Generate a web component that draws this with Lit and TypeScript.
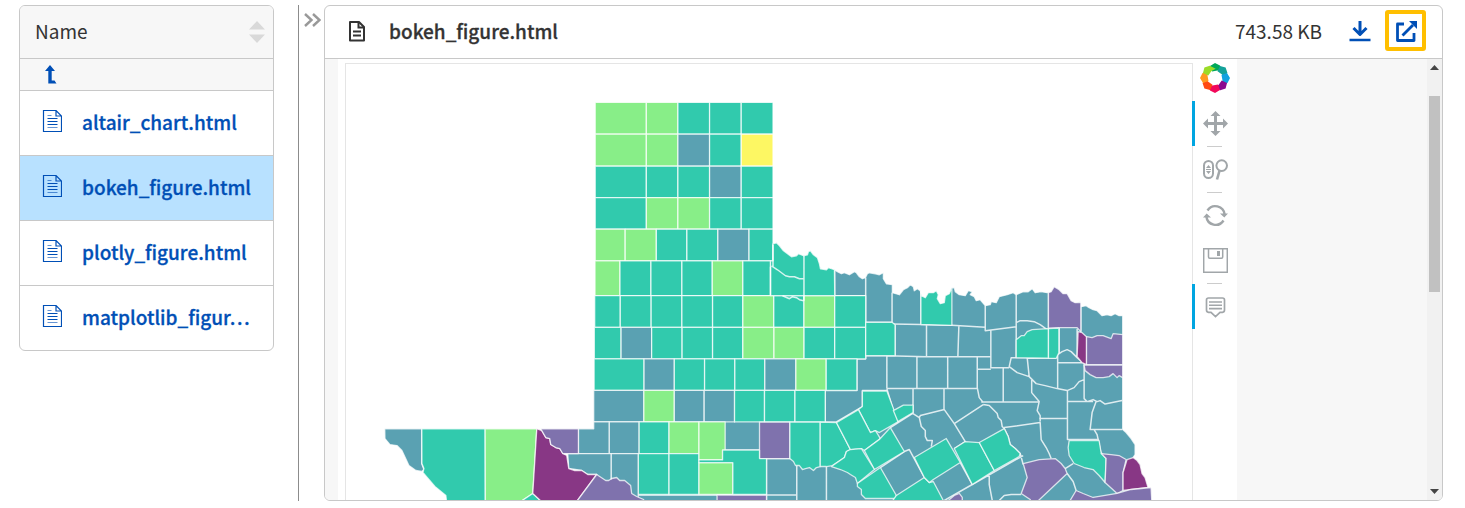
import { LitElement, html, svg, css } from "lit";
import { customElement, property } from "lit/decorators.js";

const FILL: Record<string, string> = {
  B: "#5aa1b2",
  G: "#31caad",
  L: "#88ee88",
  Y: "#fdf763",
  P: "#7f72ad",
  M: "#883785",
};

/* Rows of rectangular counties: top, bottom, x edges, one colour code per cell */
const ROWS: [number, number, number[], string][] = [
  [102.5, 134.3, [595.5, 646.7, 678.3, 710, 741.7, 773.5], "LLGGG"],
  [134.3, 166.3, [595.5, 646.7, 678.3, 710, 741.7, 773.5], "LLBGY"],
  [166.3, 197.7, [595.5, 646.7, 678.3, 710, 741.7, 773.5], "GGGBG"],
  [197.7, 229.4, [595.5, 646.7, 678.3, 710, 741.7, 773.5], "GLLGG"],
  [229.4, 261.2, [595.5, 625.5, 656.7, 687.3, 718.3, 749.5, 773.5], "LLGGBG"],
  [261.2, 296, [595.3, 620.3, 651.3, 682.3, 712.7, 743.3, 771], "LGGGLG"],
  [296, 327.6, [595, 620.6, 651.5, 682.3, 713, 743.3, 774.3, 804.5, 835.3, 866.3], "GGGGGLGLG"],
  [327.6, 359.2, [594.6, 621.4, 652, 682.5, 713, 743.3, 774.5, 804.6, 835.3, 866.3], "GBGGGLLGG"],
  [359.2, 390.8, [594.4, 644.4, 674.7, 705, 735.3, 765.3, 796.4, 826.8, 857.5], "GBGGGBLG"],
  [390.8, 422.4, [594, 644.2, 674.7, 704.6, 735, 765, 795.5, 825.8], "BLBBGGG"],
  [422.4, 454, [609.4, 639.5, 669.4], "BG"],
  [422.4, 454, [669.4, 699.4], "L"],
  [454, 495, [638.5, 669.4, 699.4], "GG"],
  [463.2, 495, [699.4, 733.3], "L"],
  [422.6, 459, [760, 790.4], "P"],
  [495.5, 506, [717.5, 767], "P"],
];

const OUTLINE =
  "773.5,244 777,243 780,246 784,251 788,254 792,257 797,256 799,254 804,256 808,255 809,252 811,251 814,255 818,258 820,264 821,269 827,270 829,268 835,270 838,272 842,274 845,273 850,275 855,272 857,273 860,277 863,279 866,278 868,274 870,273 876,274 880,275 884,273 884,279 887,284 893,285 893,293 900,295 904,290 908,288 911,285 914,287 915,291 918,289 921,291 922,296 926,298 929,293 934,293 937,291 939,295 938,299 941,304 945,303 946,296 950,294 952,288 955,288 956,292 960,295 966,296 969,291 973,292 971,295 975,297 977,301 981,300 986,306 991,305 992,302 997,303 1000,297 1008,295 1014,293 1017,295 1024,292 1029,292 1033,289 1036,293 1042,292 1048,293 1052,292 1055,287 1060,290 1064,294 1068,294 1072,301 1076,303 1081,302 1082,307 1087,306 1090,308 1094,310 1098,311 1103,316 1108,315 1112,316 1116,314 1120,316 1123.6,316 1123.6,430 1127,433 1132,439 1136,445 1136,455 1134,458 1138,461 1141,465 1143,474 1146,478 1149,489 1152,490 1153,506 597,506 578.7,429.2 594,429.2 594,390 640,359 866,359 866,296 771,296";

/* Irregular counties */
const SHAPES: [string, string][] = [
  ["B", "594,422.4 609.4,422.4 609.4,454 578.7,454 578.7,429.2 594,429.2"],
  ["B", "568,454 638.5,454 638.5,506 597,506 597,475 588,475 582,471 569,469"],
  ["G", "771,261.2 773.5,261 773.5,244 777,243 780,246 784,251 788,254 792,257 797,256 799,254 804,256 808,255 809,252 811,251 814,255 818,258 820,264 821,269 827,270 829,268 835,270 835.3,296 771,296"],
  ["G", "921.6,293 922,296 926,298 929,293 934,293 937,291 939,295 938,299 941,304 945,303 946,296 950,294 952.6,288 952.6,325.6 921.6,324.8"],
  ["G", "866.3,322.6 892.7,322.6 895.7,325 895.7,356 866.3,356"],
  ["P", "1049.3,293 1052,292 1055,287 1060,290 1064,294 1068,294 1072,301 1076,303 1081.7,303 1081.7,332 1078,328 1060,328 1049.3,328.5"],
  ["G", "1017,340 1022,336 1025,336 1028,332 1033,330 1049.3,329 1049.3,358.5 1017,358"],
  ["G", "1049.3,329 1059.7,328.4 1059.7,353 1057,358.8 1049.3,358.5"],
  ["M", "1079,332 1083,333 1087.4,337 1087.4,365 1083,363 1078,357"],
  ["P", "1087.4,337 1093,338 1098,336 1104,336 1112,339 1114,334 1123.6,335 1123.6,365 1087.4,365"],
  ["P", "1085,365.5 1123.6,365.5 1123.6,378 1120,376 1118,378 1114,374 1110,377 1104,378 1097,378 1091,375 1086,371"],
  ["L", "699.4,422.4 725.6,422.4 725.6,450.5 723,450.5 723,460.4 699.4,460.4"],
  ["G", "723,450.5 760,450.5 760,459 767,459 767,495 733.3,495 733.3,463.2 699.4,463.2 699.4,460.4 723,460.4"],
  ["G", "790.4,422.6 820.8,422.6 820.8,467 817,468 814,471 810,468 806,469 803,470 800,466 796,466 794,462 790.4,459"],
  ["G", "820.8,422.6 837,423 851,450 847,452 845,458 833,466 827,467 820.8,467"],
  ["G", "863,391.5 887.5,391.5 899,422 880,433 876,431 871,433 859,410 863,407"],
  ["G", "859,410 871,433 876,431 878,434 881,439 865,451 862,449 851,450 837,423"],
  ["G", "880,440 891,428 905,452 875,470 865,451"],
  ["G", "894,411 904,405.5 913.7,405.5 913.7,413 898.5,422"],
  ["G", "847,452 851,450 862,449 875,470 858,484 856,478 851,475 848,473 841,470 832,467 845,458"],
  ["G", "858,484 881,468 897,496 896,499 866,499 862,495 862,490 858,487"],
  ["G", "897,496 925,478 930,483 934,482 944,501 944,506 890,506"],
  ["G", "915,458 947,439 961,463 934,480 930,483 925,478"],
  ["G", "955,449 966,442 980,443 995,471 973,485"],
  ["G", "980,443 1005,429 1009,437 1011,445 1016,449 1021,454 1020,457 995,471"],
  ["P", "949,501 955,496 960,494 963,498 963,506 945,506"],
  ["P", "1024,464 1040,460 1056,459 1062,464 1066,469 1068,474 1034,506 1031,500 1022,494 1028,478"],
  ["G", "1070,441 1100,441 1102,453 1107,459 1106,483 1100,476 1094,470 1085,468 1075,464 1070,456 1069,448"],
  ["P", "1102,454 1112,455 1120,456 1127,460 1124,473 1124,491 1118,494 1106,483 1107,459"],
  ["M", "1128,460 1134,458 1138,461 1141,465 1143,474 1146,478 1149,488 1124,491 1124,473"],
  ["P", "1068,506 1077,491 1084,494 1094,498 1118,494 1132,490 1152,488 1153,506"],
  ["B", "384.8,429.2 421.7,429.2 421.7,464 424,470 422,472 416,471 409,466 402,451 397,446 390,445 385,439"],
  ["G", "421.9,429.2 485.3,429.2 485.5,506 447,506 446,496 435,487 423,473 424,469 422,464"],
  ["L", "485.3,429.2 537,429.2 533,494 515,506 485.5,506"],
  ["G", "533,494 546,506 515,506"],
  ["M", "537,429.2 542,431 546,438 550,439 551,445 556,448 560,449 563,454 567,456 569,469 575,471 582,471 588,475 597,475 574,506 546,506 533,494"],
  ["P", "541,429.2 578.7,429.2 578.7,454 563,454 560,449 556,448 551,445 550,439 546,438"],
  ["P", "597,475 606,481 609,481 612,479 617,478 620,481 625,481 631,486 632,494 637,497 644,500 644,506 574,506"],
];

/* Borders between counties of the plain blue base */
const LINES =
  "M835.3 270V296H866.3M866.3 278V359H857.5V390.8H825.8V422.4H837L863 407V391H887.5M866.3 322.5H892.7V293M892.7 324.4 921.6 324.8 952.6 325.6 986 327.5M921.6 291V324.8M986 306V331L1017 327" +
  "M895.7 325V356M927.2 325V357M959.6 326 958.6 357M991.6 330V368H1010M866.3 356H887.7L927 357H991.6M887.5 356V389M917.6 357V388.6M948.4 357V389M978 357V388L980 398 984 403M887.5 388.6 978 389M978 369.6H991.6M1004 368V402.5M982 402.5H1040" +
  "M1017 295V358M1017 323 1021 321 1028 321 1035 322 1041 325 1048 330M1049.3 293V358.5M1060 328V353M1078 329V357M1012 358H1028L1030 377 1018 373 1010 367ZM1028 358.5H1057M1058.5 355 1063 352 1068 350 1072 352 1078 358 1085 364V399L1088 402 1094 400 1098 402 1101 401 1106 404.5 1123 401M1058.5 355V389M1058.5 363H1083M1081.7 303V332" +
  "M1030 377 1037 384 1046 386 1050 387 1058 389 1068 391 1075 388 1080 382 1085 380M1032.5 379V393L1040 402 1038 411 1041 416V422M1068.3 391V440H1100M1068.3 402H1094M1097 402 1093 413 1091 430H1123M1040 419H1068M1095 430 1098 435 1102 454M1005 428 1041 423 1042 440 1047 448 1050 454 1052 459M984 405 990 406 995 411 998 414 999 418 1002 421 1003 427 1005 429 1009 437 1011 445 1016 449 1021 454 1024 465" +
  "M887.5 389 894 411M913.7 389V414L920 418 921 416 945 410 955 424 984 405M944.7 389V410M955 424 966 442 955 449M891 428 913 414M920 418 922 427 926 431 926 437 928 441 933 441 932 447M905 452 910 450 925 478M881 468 905 452" +
  "M973 485 945 501M961 463 973 485 1024 456M990 475V485L994 506M1000 501 1005 496 1012 495 1022 495M1068 474 1074 482 1077 491M1066 469 1074 464M1132 490 1133 506M797.3 466V506M827 467V506M760 459H797M638 495.5H797M767 459V506M725.6 450.5H760";

/* Rivers and borders that run over the filled counties */
const INNER_LINES =
  "M772 266 778 270 786 276 790 277 795 277 800 279 804 279M771 267V296M773.5 245V267M804.5 256V301M783 296 790 299 793 297 797 298 800 300 804 301M611.5 454V480";

function points(x0: number, y0: number, x1: number, y1: number) {
  return `${x0},${y0} ${x1},${y0} ${x1},${y1} ${x0},${y1}`;
}

@customElement("county-map")
class CountyMap extends LitElement {
  static styles = css`
    :host { display: block; }
    .map { display: block; width: 100%; }
    .county { stroke: #fff; stroke-opacity: 0.75; stroke-width: 1.3; stroke-linejoin: round; }
    .border { fill: none; stroke: #fff; stroke-opacity: 0.8; stroke-width: 1.5; stroke-linejoin: round; }
  `;

  render() {
    return html`<svg class="map" viewBox="346 64 847 442" role="img" aria-label="Texas county map">
      <polygon class="county" fill=${FILL.B} points=${OUTLINE}></polygon>
      <path class="border" d=${LINES}></path>
      ${ROWS.map(([top, bottom, xs, codes]) =>
        [...codes].map((c, i) => svg`<polygon class="county" fill=${FILL[c]} points=${points(xs[i], top, xs[i + 1], bottom)}></polygon>`)
      )}
      ${SHAPES.map(([c, p]) => svg`<polygon class="county" fill=${FILL[c]} points=${p}></polygon>`)}
      <path class="border" d=${INNER_LINES}></path>
    </svg>`;
  }
}

const PETALS = ["#00a859", "#14a29a", "#12a1e0", "#8b0a8f", "#f2085a", "#ff4a12", "#ff9a1f", "#9bdc28"];

const TOOL_ICONS = {
  pan: svg`<path fill="#a1a6a9" d="M12.5 0 17.5 5H14V11H20V7.500L25 12.500 20 17.500V14H14V20H17.500L12.500 25 7.500 20H11V14H5V17.500L0 12.500 5 7.500V11H11V5H7.500Z"/>`,
  zoom: svg`<g fill="none" stroke="#a1a6a9"><rect x="1" y="4" width="9" height="17" rx="4.500" stroke-width="2"/><circle cx="18.700" cy="8.600" r="5.300" stroke-width="2"/><path d="M16.600 13.500 14 22.500" stroke-width="2.600"/><path d="M3 12.500H8" stroke-width="1"/></g><path fill="#a1a6a9" d="M5.500 8 8 11H3ZM5.500 17 8 14H3Z"/>`,
  reset: svg`<g fill="none" stroke="#a1a6a9" stroke-width="2.400"><path d="M4.500 7.500A9.300 9.300 0 0 1 21.600 11.500"/><path d="M20.500 17.500A9.300 9.300 0 0 1 3.400 13.500"/></g><path fill="#a1a6a9" d="M17 10.500H25L21.300 14.500ZM0 14.500H8L3.700 10.500Z"/>`,
  save: svg`<g fill="none" stroke="#a1a6a9" stroke-width="1.500"><path d="M.7.700H24.300V24.300H.7ZM5.500.700V9Q5.500 10.200 6.700 10.200H18.500Q19.700 10.200 19.700 9V.7"/></g><path fill="#a1a6a9" d="M14 3H17V8H14Z"/>`,
  hover: svg`<path fill="none" stroke="#a1a6a9" stroke-width="1.700" d="M5.500 4H19.500Q21.500 4 21.500 6V16Q21.500 18 19.500 18.300H17L12.500 22.500 8 18.300H5.500Q3.500 18 3.500 16V6Q3.500 4 5.500 4Z"/><path stroke="#a1a6a9" stroke-width="1.600" d="M6 8H19M6 11.300H19M6 14.600H19"/>`,
};

@customElement("plot-toolbar")
class PlotToolbar extends LitElement {
  static styles = css`
    :host { display: flex; flex-direction: column; align-items: flex-start; }
    .logo { display: block; width: 30px; height: 30px; margin: 0 0 8px 8px; }
    .tool { display: flex; align-items: center; width: 45px; height: 45px; padding: 0 0 1px 8px; border: 0; border-left: 3px solid transparent; background: none; }
    .tool[aria-pressed="true"] { border-left-color: #00a5e1; }
    .icon { width: 25px; height: 25px; }
    .rule { width: 15px; height: 1px; margin-left: 15px; background: #ccc; }
  `;

  tool(label: string, icon: unknown, active = false) {
    return html`<button class="tool" type="button" aria-label=${label} aria-pressed=${active ? "true" : "false"}>
      <svg class="icon" viewBox="0 0 25 25">${icon}</svg>
    </button>`;
  }

  render() {
    return html`
      <svg class="logo" viewBox="-15 -15 30 30" role="img" aria-label="Bokeh">
        ${PETALS.map((c, i) => svg`<path fill=${c} transform="rotate(${i * 45})" d="M-5 -12 0 -15 5 -12.500 7 -6 2.500 -7.500 -3 -6.500Z"/>`)}
      </svg>
      ${this.tool("Pan", TOOL_ICONS.pan, true)}
      <div class="rule"></div>
      ${this.tool("Wheel zoom", TOOL_ICONS.zoom)}
      <div class="rule"></div>
      ${this.tool("Reset", TOOL_ICONS.reset)}
      ${this.tool("Save", TOOL_ICONS.save)}
      <div class="rule"></div>
      ${this.tool("Hover", TOOL_ICONS.hover, true)}
    `;
  }
}

@customElement("file-list")
class FileList extends LitElement {
  @property({ type: Array }) files: string[] = [];
  @property() selected = "";

  static styles = css`
    :host { display: block; border: 1px solid #c8c8c8; border-radius: 6px; overflow: hidden; }
    .list { width: 100%; border-collapse: collapse; table-layout: fixed; }
    .head { height: 52px; padding: 0 8px 0 15px; background: #f7f7f7; font-weight: 400; text-align: left; }
    .sort { display: flex; align-items: center; justify-content: space-between; width: 100%; padding: 0; border: 0; background: none; font: inherit; color: #333; }
    .label { padding-bottom: 2px; }
    .arrows { width: 16px; height: 22px; }
    .up, .cell { padding: 0; border-top: 1px solid #c8c8c8; }
    .up { height: 31px; background: #f7f7f7; }
    .cell { height: 64px; }
    .selected { background: #b8e1ff; }
    .parent { display: flex; padding-left: 25px; }
    .upicon { width: 12px; height: 19px; }
    .link { display: flex; align-items: center; gap: 20px; padding: 0 19px 2px 22px; color: #004fb6; text-decoration: none; font-weight: 500; -webkit-text-stroke: 0.3px #004fb6; }
    .file { flex: none; width: 20px; height: 24px; }
    .name { white-space: nowrap; }
  `;

  render() {
    return html`<table class="list">
      <thead>
        <tr><th class="head" scope="col"><button class="sort" type="button"><span class="label">Name</span>
          <svg class="arrows" viewBox="0 0 16 22" fill="#d9d9d9"><path d="M8 0 16 8.500H0ZM8 22 16 13.500H0Z"/></svg>
        </button></th></tr>
      </thead>
      <tbody>
        <tr><td class="up"><a class="parent" href="#" aria-label="Parent folder">
          <svg class="upicon" viewBox="0 0 12 19" fill="#004fb6"><path d="M5 0 10 6H6.700V15.500H9.500L11.500 18.500H3.300V6H0Z"/></svg>
        </a></td></tr>
        ${this.files.map((name) => html`<tr><td class="cell ${name === this.selected ? "selected" : ""}">
          <a class="link" href="#">
            <svg class="file" viewBox="0 0 20 24" fill="none" stroke="#004fb6">
              <path stroke-width="1.200" d="M1.500.500H14L19.500 6V21.500H1.500ZM14 .5V6H19.500"/>
              <path d="M5.500 5.500H9.500" opacity=".6"/><path d="M5.500 8.500H15.500M5.500 11.500H15.500M5.500 14.500H15.500"/><path d="M5.500 17.500H15.500" opacity=".6"/>
            </svg>
            <span class="name">${name}</span>
          </a>
        </td></tr>`)}
      </tbody>
    </table>`;
  }
}

@customElement("app-root")
class AppRoot extends LitElement {
  static styles = css`
    :host {
      display: flex; align-items: flex-start; box-sizing: border-box; height: 100vh; padding: 5px 22px 7px 19px;
      background: #fff; color: #333; font: 19px/26px "Noto Sans CJK KR", sans-serif;
    }
    .files { flex: none; width: 253px; margin-right: 24px; }
    .splitter { display: flex; align-items: flex-start; align-self: stretch; flex: none; width: 26px; padding: 0; border: 0; border-left: 1px solid #8c8c8c; background: none; }
    .chevrons { width: 17px; height: 14px; margin: 8px 0 0 5px; }
    .viewer { display: flex; flex-direction: column; align-self: stretch; flex: 1; min-width: 0; border: 1px solid #c8c8c8; border-radius: 6px; overflow: hidden; }
    .bar { display: flex; align-items: center; box-sizing: border-box; flex: none; height: 53px; padding: 0 16px 3px 23px; border-bottom: 1px solid #c8c8c8; }
    .doc { width: 18px; height: 22px; }
    .title { flex: 1; margin: 0 0 0 23px; font-size: 19px; font-weight: 500; -webkit-text-stroke: 0.3px #333; }
    .action { display: flex; align-items: center; justify-content: center; box-sizing: border-box; width: 41px; height: 41px; border: 4px solid transparent; border-radius: 3px; }
    .download { margin-left: 17px; margin-right: 5px; }
    .marked { border-color: #ffbf00; }
    .glyph { width: 22px; height: 22px; }
    .body { display: flex; flex: 1; min-height: 0; background: #f7f7f7; }
    .frame { flex: 1; min-width: 0; overflow: hidden; padding-left: 13px; }
    .figure { display: flex; align-items: flex-start; width: 899px; margin: 0; padding: 4px 0 0 7px; box-sizing: border-box; background: #fff; }
    .plot { flex: none; box-sizing: border-box; width: 848px; border: 1px solid #e5e5e5; border-width: 1px 1px 0 1px; }
    .tools { flex: none; margin-left: -1px; }
    .scroll { display: flex; flex-direction: column; align-items: center; width: 15px; background: #f1f1f1; }
    .arrow { flex: none; width: 9px; height: 5px; margin: 6px 0; }
    .track { flex: 1; width: 11px; padding-top: 20px; }
    .thumb { height: 196px; background: #c1c1c1; }
  `;

  render() {
    return html`
      <file-list class="files" selected="bokeh_figure.html"
        .files=${["altair_chart.html", "bokeh_figure.html", "plotly_figure.html", "matplotlib_figur…"]}></file-list>
      <button class="splitter" type="button" aria-label="Collapse file list">
        <svg class="chevrons" viewBox="0 0 17 14" fill="none" stroke="#999" stroke-width="2.400"><path d="M1 1 7.500 7 1 13M9 1 15.500 7 9 13"/></svg>
      </button>
      <main class="viewer">
        <header class="bar">
          <svg class="doc" viewBox="0 0 18 22" fill="none" stroke="#333" stroke-width="2"><path stroke-linejoin="round" d="M2 2H11L16 7V20.500H2Z"/><path d="M10.500 2V7.500H16M5 11.500H13M5 15.500H13"/></svg>
          <h1 class="title">bokeh_figure.html</h1>
          <span>743.58 KB</span>
          <a class="action download" href="#" aria-label="Download">
            <svg class="glyph" viewBox="0 0 22 22" fill="none" stroke="#004fb6" stroke-width="3"><path d="M11 1V14M4.500 8 11 14.500 17.500 8" stroke-linejoin="round"/><path d="M.5 20H21.500" stroke-width="2.600"/></svg>
          </a>
          <a class="action marked" href="#" aria-label="Open in new tab">
            <svg class="glyph" viewBox="0 0 22 22" fill="none" stroke="#004fb6" stroke-width="2.800"><path d="M9 4H2.500V20.500H19V13" stroke-linejoin="round"/><path d="M7.500 15.500 18 5"/><path fill="#004fb6" stroke="none" d="M14 1H22V9Z"/></svg>
          </a>
        </header>
        <div class="body">
          <div class="frame">
            <figure class="figure">
              <county-map class="plot"></county-map>
              <plot-toolbar class="tools"></plot-toolbar>
            </figure>
          </div>
          <div class="scroll">
            <svg class="arrow" viewBox="0 0 9 5"><path fill="#444" d="M4.500 0 9 5H0Z"/></svg>
            <div class="track"><div class="thumb"></div></div>
            <svg class="arrow" viewBox="0 0 9 5"><path fill="#444" d="M4.500 5 9 0H0Z"/></svg>
          </div>
        </div>
      </main>
    `;
  }
}
